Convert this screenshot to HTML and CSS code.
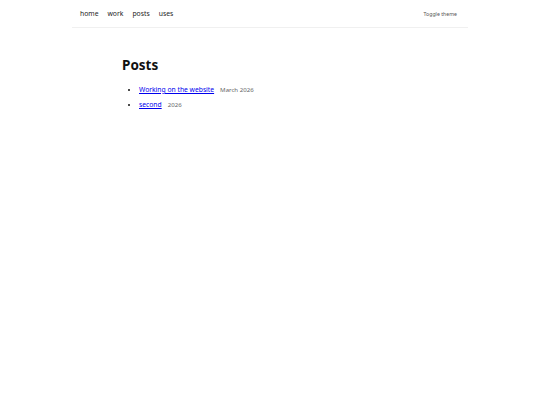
FILE: index.html
```html
<!DOCTYPE html>
<html lang="en">
<head>
<meta charset="utf-8">
<title>Posts</title>
<link rel="stylesheet" href="styles.css">
</head>
<body>
<header class="site-header">
  <nav class="nav">
    <a href="#">home</a>
    <a href="#">work</a>
    <a href="#">posts</a>
    <a href="#">uses</a>
  </nav>
  <button class="toggle" type="button">Toggle theme</button>
</header>
<main class="content">
  <h1 class="title">Posts</h1>
  <ul class="posts">
    <li><a href="#">Working on the website</a><span class="date">March 2026</span></li>
    <li><a href="#">second</a><span class="date">2026</span></li>
  </ul>
</main>
</body>
</html>
```
FILE: styles.css
```css
* { box-sizing: border-box; }
html, body { margin: 0; padding: 0; background: #fff; }
body {
  font-family: "Noto Sans", "Open Sans", sans-serif;
  color: #111;
}
.site-header {
  width: 396px;
  margin: 0 auto;
  height: 28px;
  display: flex;
  align-items: center;
  justify-content: space-between;
  padding: 0 11px 0 8px;
  border-bottom: 1px solid #f0f0f0;
}
.nav { display: flex; gap: 9px; }
.nav a {
  font-size: 6.8px;
  color: #222;
  text-decoration: none;
}
.toggle {
  font-family: inherit;
  font-size: 5.2px;
  color: #555;
  background: none;
  border: 0;
  padding: 0;
}
.content {
  width: 296px;
  margin: 0 auto;
  padding-top: 27px;
}
.title {
  margin: 0 0 8px;
  font-size: 13.5px;
  line-height: 20px;
  font-weight: 700;
}
.posts {
  margin: 0;
  padding-left: 17px;
  font-size: 6.75px;
}
.posts li { line-height: 14.5px; }
.posts a { color: #0000ee; }
.date {
  margin-left: 6px;
  font-size: 6.1px;
  color: #666;
}
```
